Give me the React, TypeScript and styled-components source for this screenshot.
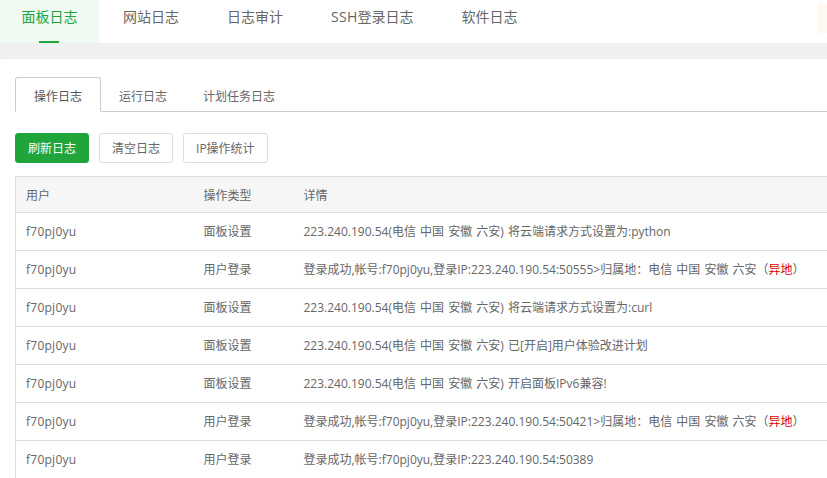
import styled, { createGlobalStyle } from 'styled-components'

const GlobalStyle = createGlobalStyle`
  html, body {
    margin: 0;
    height: 100%;
    overflow: hidden;
    background: #f0f0f0;
  }
  body {
    font-family: 'Open Sans', 'Noto Sans CJK SC', sans-serif;
    font-size: 12px;
    color: #666;
  }
`

const subTabs = ['操作日志', '运行日志', '计划任务日志']
const buttons = ['刷新日志', '清空日志', 'IP操作统计']

const IP = '223.240.190.54'
const PLACE = '电信 中国 安徽 六安'

const rows = [
  { type: '面板设置', detail: `${IP}(${PLACE}) 将云端请求方式设置为:python` },
  { type: '用户登录', detail: `登录成功,帐号:f70pj0yu,登录IP:${IP}:50555>归属地：${PLACE}`, remote: true },
  { type: '面板设置', detail: `${IP}(${PLACE}) 将云端请求方式设置为:curl` },
  { type: '面板设置', detail: `${IP}(${PLACE}) 已[开启]用户体验改进计划` },
  { type: '面板设置', detail: `${IP}(${PLACE}) 开启面板IPv6兼容!` },
  { type: '用户登录', detail: `登录成功,帐号:f70pj0yu,登录IP:${IP}:50421>归属地：${PLACE}`, remote: true },
  { type: '用户登录', detail: `登录成功,帐号:f70pj0yu,登录IP:${IP}:50389` },
]

export default function App() {
  return (
    <Page>
      <GlobalStyle />
      <TopBar>
        <TopTabs>
          <TopTab $active>面板日志</TopTab>
          <TopTab>网站日志</TopTab>
          <TopTab>日志审计</TopTab>
          <TopTab><Latin>SSH</Latin>登录日志</TopTab>
          <TopTab>软件日志</TopTab>
        </TopTabs>
        <Notice />
      </TopBar>
      <Card>
        <SubTabs>
          {subTabs.map((t, i) => (
            <SubTab key={t} $active={i === 0}>{t}</SubTab>
          ))}
        </SubTabs>
        <Toolbar>
          {buttons.map((b, i) => (
            <Button key={b} $primary={i === 0}>{b}</Button>
          ))}
        </Toolbar>
        <LogTable>
          <colgroup>
            <col style={{ width: 178 }} />
            <col style={{ width: 100 }} />
            <col />
          </colgroup>
          <thead>
            <tr>
              <HeadCell>用户</HeadCell>
              <HeadCell>操作类型</HeadCell>
              <HeadCell>详情</HeadCell>
            </tr>
          </thead>
          <tbody>
            {rows.map((r, i) => (
              <tr key={i}>
                <UserCell>f70pj0yu</UserCell>
                <Cell>{r.type}</Cell>
                <Cell>
                  {r.detail}
                  {r.remote && (
                    <>
                      （<Remote>异地</Remote>）
                    </>
                  )}
                </Cell>
              </tr>
            ))}
          </tbody>
        </LogTable>
      </Card>
    </Page>
  )
}

const Page = styled.div`
  height: 478px;
  overflow: hidden;
`

const TopBar = styled.div`
  height: 43px;
  background: #fff;
  display: flex;
  justify-content: space-between;
  align-items: flex-start;
  margin-bottom: 16px;
`

const TopTabs = styled.div`
  display: flex;
`

const TopTab = styled.div<{ $active?: boolean }>`
  position: relative;
  height: 43px;
  line-height: 34px;
  font-size: 14px;
  padding: 0 ${p => (p.$active ? '21.5px' : '24px')};
  color: ${p => (p.$active ? '#20a53a' : '#666')};
  background: ${p => (p.$active ? '#f0f9f2' : 'transparent')};

  &::after {
    content: '';
    display: ${p => (p.$active ? 'block' : 'none')};
    position: absolute;
    left: 39px;
    bottom: 0;
    width: 20px;
    height: 2px;
    background: #20a53a;
  }
`

const Latin = styled.span`
  letter-spacing: 0.3px;
`

const Notice = styled.div`
  width: 10px;
  height: 30px;
  margin-top: 3px;
  background: #fdf9f0;
  border-radius: 2px 0 0 2px;
`

const Card = styled.div`
  height: 419px;
  padding: 18px 0 0 15px;
  box-sizing: border-box;
  background: #fff;
  border-radius: 3px 0 0 0;
  overflow: hidden;
`

const SubTabs = styled.div`
  display: flex;
  height: 35px;
  box-sizing: border-box;
  border-bottom: 1px solid #ccc;
  margin-bottom: 21px;
`

const SubTab = styled.div<{ $active?: boolean }>`
  height: ${p => (p.$active ? '35px' : '34px')};
  box-sizing: border-box;
  padding: 0 18px;
  line-height: ${p => (p.$active ? '38px' : '40px')};
  border: ${p => (p.$active ? '1px solid #ccc' : 'none')};
  border-bottom-color: #fff;
  border-radius: 3px 3px 0 0;
  background: ${p => (p.$active ? '#fff' : 'transparent')};
  color: ${p => (p.$active ? '#555' : '#666')};
`

const Toolbar = styled.div`
  display: flex;
  gap: 10px;
  margin-bottom: 13px;
`

const Button = styled.div<{ $primary?: boolean }>`
  height: 30px;
  box-sizing: border-box;
  line-height: 30px;
  padding: 0 12px;
  border: 1px solid ${p => (p.$primary ? '#20a53a' : '#ddd')};
  border-radius: 3px;
  background: ${p => (p.$primary ? '#20a53a' : '#fff')};
  color: ${p => (p.$primary ? '#fff' : '#666')};
`

const LogTable = styled.table`
  width: 830px;
  table-layout: fixed;
  border-collapse: collapse;
  border: 1px solid #ddd;
`

const HeadCell = styled.th`
  height: 36px;
  padding: 0 10px;
  box-sizing: border-box;
  text-align: left;
  font-weight: normal;
  background: #f6f6f6;
  border-bottom: 1px solid #ddd;
`

const Cell = styled.td`
  height: 38px;
  padding: 0 10px 2px;
  box-sizing: border-box;
  border-bottom: 1px solid #ddd;
  white-space: nowrap;
  word-spacing: 1px;
`

const UserCell = styled(Cell)`
  padding-bottom: 0;
  letter-spacing: 0.25px;
`

const Remote = styled.span`
  color: #d00;
`
